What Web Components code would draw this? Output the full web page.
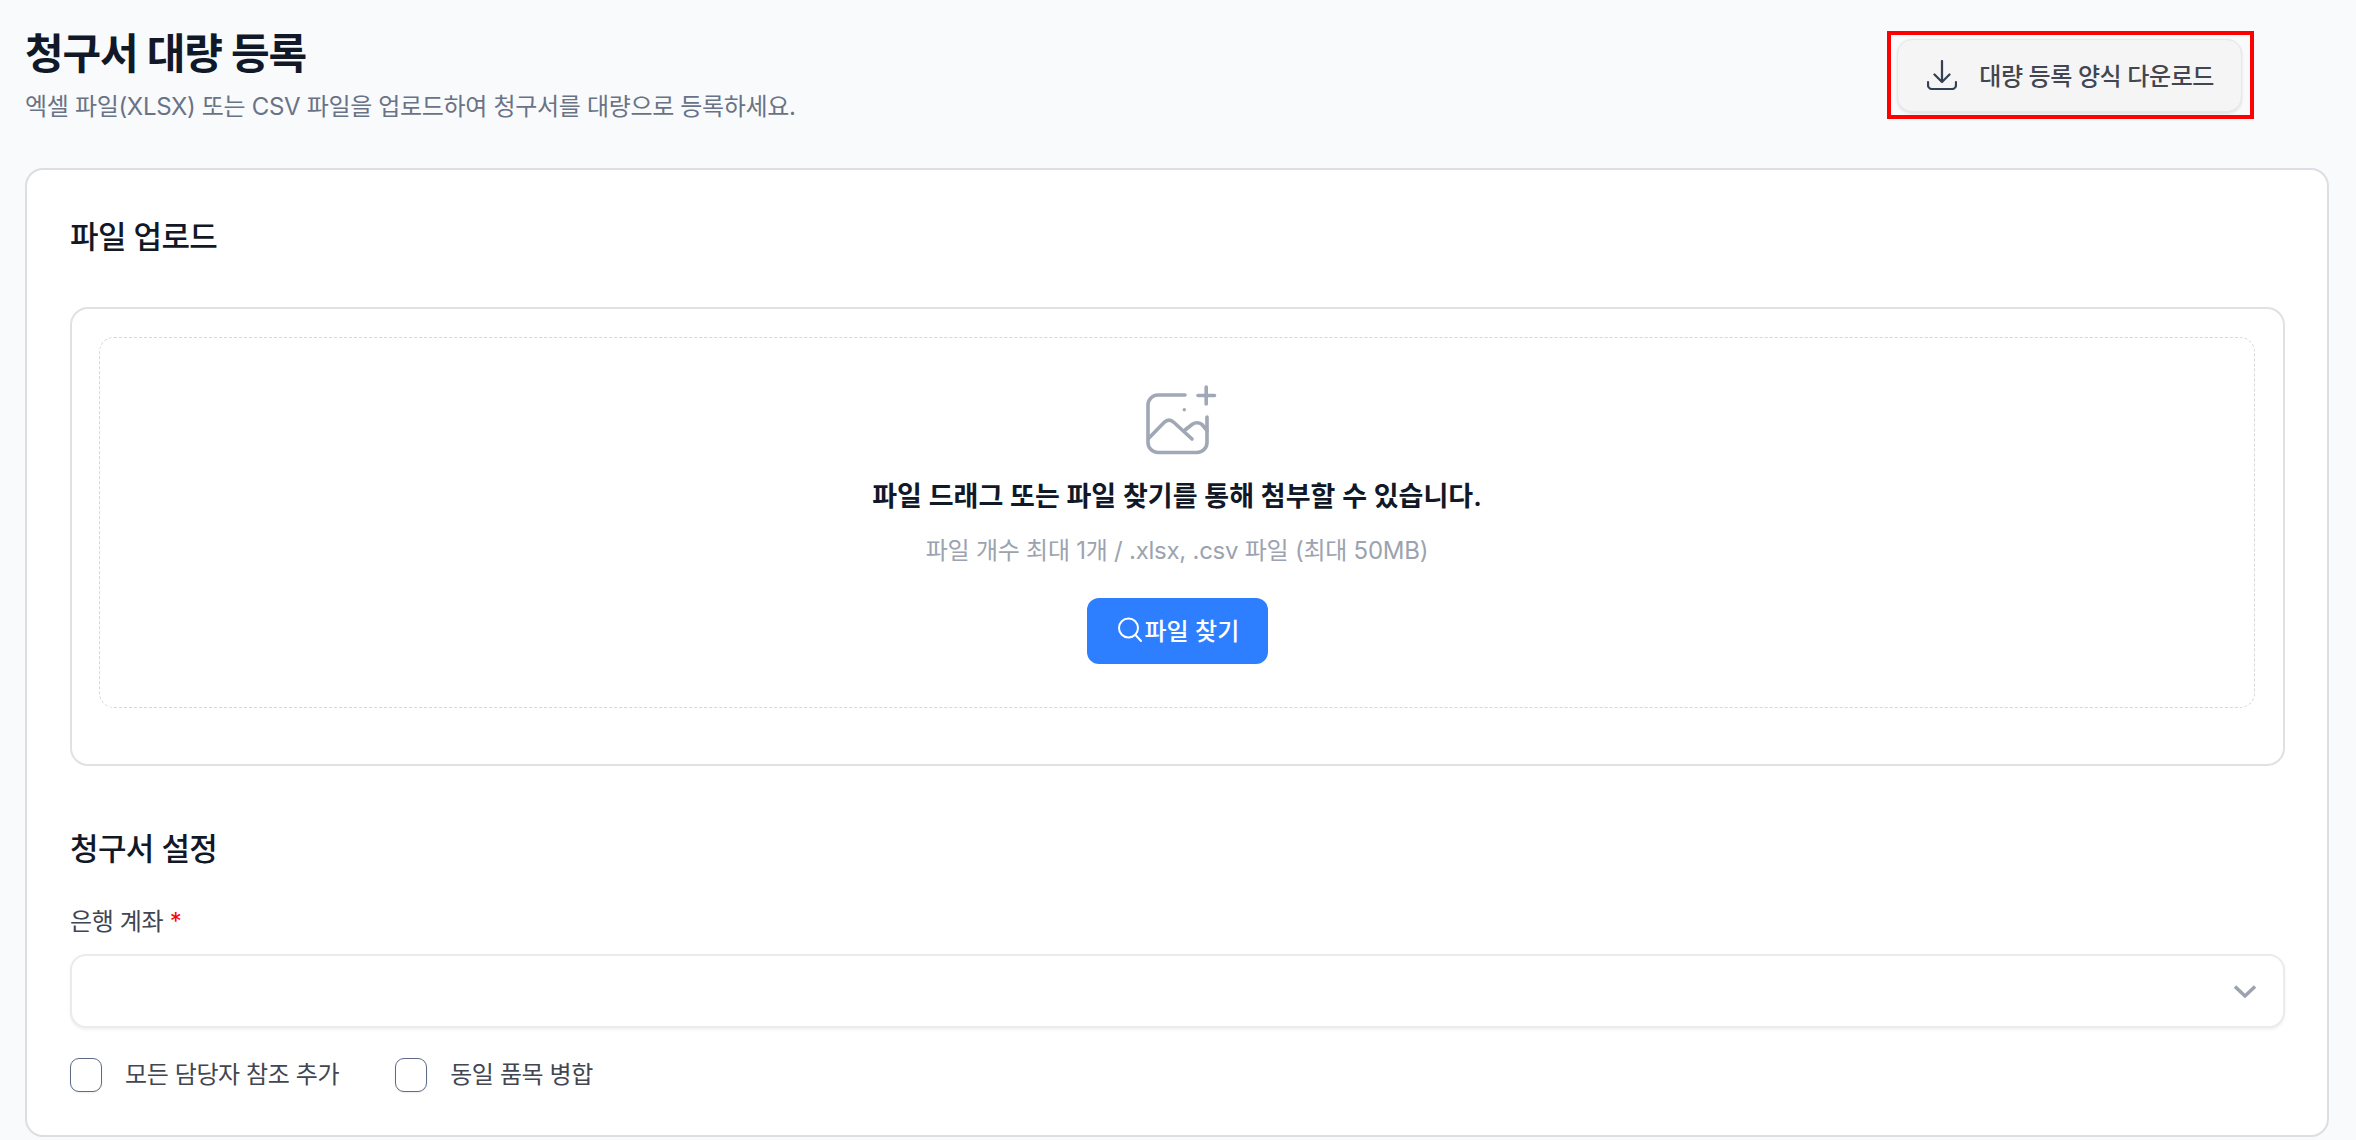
<!DOCTYPE html>
<html lang="ko">
<head>
<meta charset="utf-8">
<title>청구서 대량 등록</title>
<style>
  html, body {
    margin: 0;
    background: #f9fafb;
    font-family: 'Inter', 'Noto Sans CJK KR', sans-serif;
    color: #111827;
  }
</style>
</head>
<body>
<bulk-page></bulk-page>

<script>
const FONT = "'Inter', 'Noto Sans CJK KR', sans-serif";

class PageHeader extends HTMLElement {
  constructor() {
    super();
    this.attachShadow({ mode: 'open' }).innerHTML = `
      <style>
        :host { display: flex; justify-content: space-between; align-items: flex-start; padding: 30px 114px 45px 25px; font-family: ${FONT}; }
        h1 { margin: 0; font-size: 42px; line-height: 48px; font-weight: 600; color: #111827; letter-spacing: -1.2px; }
        p { margin: 12px 0 0; font-size: 24px; line-height: 33px; color: #697386; letter-spacing: -0.33px; }
      </style>
      <div>
        <h1>${this.getAttribute('heading')}</h1>
        <p>${this.getAttribute('desc')}</p>
      </div>
      <slot></slot>`;
  }
}
customElements.define('page-header', PageHeader);

class DownloadButton extends HTMLElement {
  constructor() {
    super();
    this.attachShadow({ mode: 'open' }).innerHTML = `
      <style>
        :host { display: block; position: relative; margin-top: 9px; font-family: ${FONT}; }
        button {
          display: flex; align-items: center; gap: 22px; height: 73px; padding: 0 27px 2px 29px; box-sizing: border-box;
          background: #f5f5f6; border: 1px solid #e5e7eb; border-radius: 15px;
          box-shadow: 0 1.5px 3px rgba(16,24,40,.1);
          font: inherit; font-size: 24px; letter-spacing: -0.4px; color: #414651; font-weight: 500;
        }
        svg { width: 30px; height: 30px; flex: none; }
        .mark { position: absolute; inset: -8px -12px -7px -10px; border: 4px solid #ff0000; pointer-events: none; }
      </style>
      <button>
        <svg viewBox="0 0 30 30" fill="none" stroke="#344054" stroke-width="2.25" stroke-linecap="round" stroke-linejoin="round">
          <path d="M15 1v21M7.500 14.500 15 22l7.500-7.500"/>
          <path d="M1 22v3a4 4 0 0 0 4 4h20a4 4 0 0 0 4-4v-3"/>
        </svg>
        <slot></slot>
      </button>
      <div class="mark"></div>`;
  }
}
customElements.define('download-button', DownloadButton);

class SectionTitle extends HTMLElement {
  constructor() {
    super();
    this.attachShadow({ mode: 'open' }).innerHTML = `
      <style>
        :host { display: block; font-size: 31px; line-height: 45px; font-weight: 500; letter-spacing: -0.6px; color: #111827; font-family: ${FONT}; }
      </style>
      <slot></slot>`;
  }
}
customElements.define('section-title', SectionTitle);

class FileDropzone extends HTMLElement {
  constructor() {
    super();
    this.attachShadow({ mode: 'open' }).innerHTML = `
      <style>
        :host { display: block; margin-top: 48px; padding: 28px 28px 56px 27px; border: 2px solid #dfe1e5; border-radius: 18px; font-family: ${FONT}; }
        .dash {
          display: flex; flex-direction: column; align-items: center; height: 371px; box-sizing: border-box;
          padding-top: 49px; border: 1px dashed #d5d7da; border-radius: 15px;
        }
        .icon { width: 68px; height: 68px; display: block; margin-left: 8px; overflow: visible; }
        strong { margin-top: 22px; font-size: 27px; line-height: 40px; font-weight: 600; color: #111827; }
        span.hint { margin-top: 16px; font-size: 24px; line-height: 36px; color: #9ca3af; letter-spacing: -0.25px; }
        button {
          display: flex; align-items: center; gap: 3px; margin-top: 29px; height: 66px; width: 181px; padding: 0 0 3px 30px; box-sizing: border-box;
          background: #2e7fff; border: 0; border-radius: 12px; color: #fff; font: inherit; font-size: 24px; font-weight: 500;
        }
        button svg { width: 25px; height: 25px; flex: none; }
      </style>
      <div class="dash">
        <svg class="icon" viewBox="0 0 68 68" fill="none" stroke="#a0a7b5" stroke-width="3.600" stroke-linecap="round" stroke-linejoin="round">
          <path d="M38 8H11a10 10 0 0 0-10 10v37.500a10 10 0 0 0 10 10h39a10 10 0 0 0 10-10V30"/>
          <path d="M51 8.500h16.500M59.200 0v17"/>
          <path d="M2 51 17 35.500q5-5 10 0L45 52"/>
          <path d="M38 43l7-5.500q5-3.500 10 0l5 6"/>
          <circle cx="37.300" cy="22.700" r="1.700" fill="#a0a7b5" stroke="none"/>
        </svg>
        <strong>${this.getAttribute('heading')}</strong>
        <span class="hint">${this.getAttribute('hint')}</span>
        <button>
          <svg viewBox="0 0 25 25" fill="none" stroke="#fff" stroke-width="2" stroke-linecap="round">
            <circle cx="11.500" cy="11" r="9.500"/>
            <path d="M18.500 18 24 24"/>
          </svg>
          <slot></slot>
        </button>
      </div>`;
  }
}
customElements.define('file-dropzone', FileDropzone);

class AccountSelect extends HTMLElement {
  constructor() {
    super();
    this.attachShadow({ mode: 'open' }).innerHTML = `
      <style>
        :host { display: block; font-family: ${FONT}; }
        label { display: block; font-size: 24px; line-height: 33px; letter-spacing: -0.35px; color: #414651; }
        b { font-weight: 400; color: #ff0000; }
        .box {
          display: flex; align-items: center; justify-content: flex-end; height: 74px; margin-top: 16px; padding-right: 27px; box-sizing: border-box;
          background: #fff; border: 2px solid #eaebee; border-radius: 16px; box-shadow: 0 1.5px 3px rgba(16,24,40,.06);
        }
        svg { width: 22px; height: 13px; }
      </style>
      <label><slot></slot> <b>*</b></label>
      <div class="box">
        <svg viewBox="0 0 22 13" fill="none" stroke="#9ca3af" stroke-width="3.400">
          <path d="M1 1.500 11 11 21 1.500"/>
        </svg>
      </div>`;
  }
}
customElements.define('account-select', AccountSelect);

class CheckItem extends HTMLElement {
  constructor() {
    super();
    this.attachShadow({ mode: 'open' }).innerHTML = `
      <style>
        :host { display: flex; align-items: center; gap: 23px; font-size: 24px; line-height: 34px; letter-spacing: -0.4px; color: #414651; font-family: ${FONT}; }
        i { display: block; width: 32px; height: 34px; box-sizing: border-box; border: 1px solid #5f6b85; border-radius: 9px; background: #fff; box-shadow: 0 1px 2px rgba(16,24,40,.08); }
      </style>
      <i></i><slot></slot>`;
  }
}
customElements.define('check-item', CheckItem);

class BulkPage extends HTMLElement {
  constructor() {
    super();
    this.attachShadow({ mode: 'open' }).innerHTML = `
      <style>
        :host { display: block; font-family: ${FONT}; }
        .card { margin: 0 27px 0 25px; padding: 44px 42px 43px 43px; background: #fff; border: 2px solid #dcdee3; border-radius: 18px; }
        .settings { margin-top: 60px; }
        account-select { margin-top: 34px; }
        .checks { display: flex; gap: 56px; margin-top: 30px; }
      </style>
      <page-header heading="청구서 대량 등록" desc="엑셀 파일(XLSX) 또는 CSV 파일을 업로드하여 청구서를 대량으로 등록하세요.">
        <download-button>대량 등록 양식 다운로드</download-button>
      </page-header>
      <div class="card">
        <section-title>파일 업로드</section-title>
        <file-dropzone heading="파일 드래그 또는 파일 찾기를 통해 첨부할 수 있습니다." hint="파일 개수 최대 1개 / .xlsx, .csv 파일 (최대 50MB)">파일 찾기</file-dropzone>
        <section-title class="settings">청구서 설정</section-title>
        <account-select>은행 계좌</account-select>
        <div class="checks">
          <check-item>모든 담당자 참조 추가</check-item>
          <check-item>동일 품목 병합</check-item>
        </div>
      </div>`;
  }
}
customElements.define('bulk-page', BulkPage);
</script>
</body>
</html>
